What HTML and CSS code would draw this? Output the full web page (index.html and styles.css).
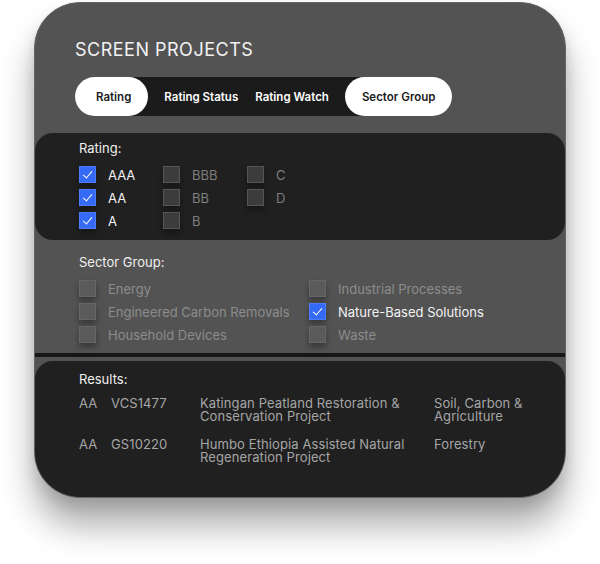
FILE: index.html
```html
<!DOCTYPE html>
<html>
<head>
<title>Screen Projects</title>
<link rel="stylesheet" href="styles.css">
</head>
<body>

<div class="card">
  <div class="head">
    <h1>SCREEN PROJECTS</h1>
    <div class="tabs">
      <div class="tab active">Rating</div>
      <div class="tab">Rating Status</div>
      <div class="tab">Rating Watch</div>
      <div class="tab active">Sector Group</div>
    </div>
  </div>

  <div class="panel rating">
    <div class="label">Rating:</div>
    <div class="grid rating-grid">
      <div class="opt on"><span class="box"></span>AAA</div>
      <div class="opt"><span class="box"></span>BBB</div>
      <div class="opt"><span class="box"></span>C</div>
      <div class="opt on"><span class="box"></span>AA</div>
      <div class="opt"><span class="box"></span>BB</div>
      <div class="opt"><span class="box"></span>D</div>
      <div class="opt on"><span class="box"></span>A</div>
      <div class="opt"><span class="box"></span>B</div>
    </div>
  </div>

  <div class="sector">
    <div class="label">Sector Group:</div>
    <div class="grid sector-grid">
      <div class="opt"><span class="box"></span>Energy</div>
      <div class="opt"><span class="box"></span>Industrial Processes</div>
      <div class="opt"><span class="box"></span>Engineered Carbon Removals</div>
      <div class="opt on"><span class="box"></span>Nature-Based Solutions</div>
      <div class="opt"><span class="box"></span>Household Devices</div>
      <div class="opt"><span class="box"></span>Waste</div>
    </div>
  </div>

  <div class="divider"></div>

  <div class="panel results">
    <div class="label">Results:</div>
    <div class="row">
      <span class="rt">AA</span>
      <span class="id">VCS1477</span>
      <span class="name">Katingan Peatland Restoration &amp; Conservation Project</span>
      <span class="sec">Soil, Carbon &amp; Agriculture</span>
    </div>
    <div class="row">
      <span class="rt">AA</span>
      <span class="id">GS10220</span>
      <span class="name">Humbo Ethiopia Assisted Natural Regeneration Project</span>
      <span class="sec">Forestry</span>
    </div>
  </div>
</div>

</body>
</html>
```

FILE: styles.css
```css
html,
body {
  height: 100%;
}

body {
  margin: 0;
  padding-top: 2px;
  box-sizing: border-box;
  background: #ffffff;
  font-family: Inter, "Liberation Sans", sans-serif;
}

.card {
  margin-left: 34px;
  width: 532px;
  height: 496px;
  box-sizing: border-box;
  border-radius: 46px;
  background: #535353;
  border: 1px solid #656565;
  overflow: hidden;
  box-shadow: 0 28px 34px rgba(0, 0, 0, 0.32), 0 8px 14px rgba(0, 0, 0, 0.12);
}

.head {
  padding: 36px 0 0 40px;
}

h1 {
  margin: 0;
  font-size: 18px;
  line-height: 22px;
  font-weight: 400;
  letter-spacing: 0.5px;
  color: #f2f2f2;
}

.tabs {
  display: inline-flex;
  gap: 15px;
  margin-top: 16px;
  height: 39px;
  background: #1b1b1b;
  border-radius: 20px;
}

.tab {
  display: flex;
  align-items: center;
  padding: 0 1px;
  font-size: 11.5px;
  font-weight: 600;
  color: #ffffff;
  border-radius: 20px;
}

.tab.active {
  padding: 0 17px;
  background: #ffffff;
  color: #1b1b1b;
}

.tab:first-child {
  padding-left: 21px;
}

.label {
  font-size: 13px;
  line-height: 16px;
  color: #f0f0f0;
}

.panel {
  background: #202020;
  border-radius: 18px;
  padding: 7px 0 11px 44px;
}

.rating {
  margin-top: 17px;
}

.grid {
  display: grid;
  row-gap: 6px;
  margin-top: 10px;
}

.rating-grid {
  grid-template-columns: repeat(3, 84px);
}

.sector-grid {
  grid-template-columns: repeat(2, 230px);
}

.opt {
  display: flex;
  align-items: center;
  height: 17px;
  font-size: 13px;
  color: #7e7e7e;
}

.opt.on {
  color: #f2f2f2;
}

.box {
  position: relative;
  width: 17px;
  height: 17px;
  box-sizing: border-box;
  margin-right: 12px;
  background: #3c3c3c;
  border: 1px solid #555555;
  box-shadow: 0 4px 6px rgba(0, 0, 0, 0.35);
}

.sector .box {
  background: #5a5a5a;
  border-color: #666666;
}

.sector .opt {
  color: #8c8c8c;
}

.sector .opt.on {
  color: #f2f2f2;
}

.opt.on .box,
.sector .opt.on .box {
  background: #356af6;
  border-color: #4d7cf8;
}

.opt.on .box::after {
  content: "";
  position: absolute;
  left: 5px;
  top: 2px;
  width: 4px;
  height: 8px;
  border: solid #ffffff;
  border-width: 0 1px 1px 0;
  transform: rotate(40deg);
}

.sector {
  padding: 14px 0 10px 44px;
}

.divider {
  height: 4px;
  background: #161616;
}

.results {
  margin-top: 4px;
  height: 200px;
  padding-top: 10px;
}

.row {
  display: flex;
  margin-top: 10px;
  font-size: 13px;
  line-height: 12.5px;
  color: #a6a6a6;
  letter-spacing: 0.1px;
}

.row + .row {
  margin-top: 16px;
}

.rt {
  width: 32px;
}

.id {
  width: 89px;
}

.name {
  width: 214px;
  margin-right: 20px;
}

.sec {
  width: 100px;
}
```
